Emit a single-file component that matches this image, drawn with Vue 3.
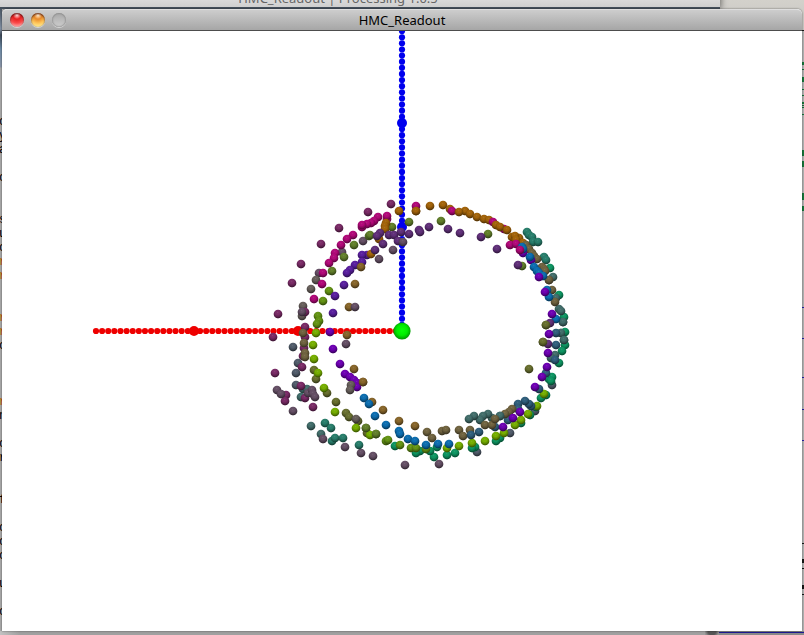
<script setup>
const palette = {
  plum: '#7b2b67', magenta: '#b3087a', mauve: '#665066', purple: '#61307a',
  indigo: '#5a1fa0', violet: '#6f00b5', olive: '#62802a', moss: '#69702f',
  green: '#659514', lime: '#77b000', orange: '#a46409', brown: '#88662a',
  khaki: '#716440', grey: '#68605c', slate: '#515c6b', steel: '#305f7d',
  blue: '#0c6fb2', teal: '#287f6c', dusk: '#426e6b', jade: '#0d9763',
}

// Samples per colour, drawn in order: "x,y x,y ..."
const samples = [
  ['dusk', '311,426 321,434 303,389 307,389 301,397 553,277 561,333'],
  ['slate', '293,347 298,363 296,373 296,385 564,340 563,322 552,385 535,411 510,433 477,452'],
  ['mauve', '363,241 342,252 319,273 293,411 323,439 345,447 361,453 373,456 405,465 439,464'],
  ['grey', '316,280 311,289 303,306 302,316 549,280'],
  ['plum', '391,204 368,212 339,228 321,244 301,264 292,283 278,314 305,312 305,327 305,337 273,337 275,373 304,348 303,356 302,367 301,386 305,398 286,395 285,401 313,407'],
  ['mauve', '277,390 281,394 308,393 312,390 313,394 315,397 302,312'],
  ['khaki', '303,333 304,343 305,353 305,357'],
  ['magenta', '387,219 387,216 378,217 374,221 371,223 367,224 362,227 362,225 353,235 347,239 341,245 335,253 334,258 329,263 323,273 322,284 314,299'],
  ['teal', '527,232 529,235 532,237 533,242 538,242 544,257 546,260 325,423 331,428 332,441 335,438 343,438 359,445'],
  ['jade', '550,268 559,295 564,317 565,332 565,345 562,351 559,363 549,379 552,377 551,381 546,395 541,398 536,407 530,415 521,423 500,438 496,441 475,447 472,448 455,453 447,455 434,457 437,447 430,451 420,451 416,453 395,446'],
  ['dusk', '556,298 559,309 561,311 561,333 564,340 563,322 555,355 551,358'],
  ['olive', '369,236 354,245 344,257 332,271 409,222 392,227 370,235 441,221 488,234 522,266'],
  ['green', '329,291 323,301 318,316 319,321 317,324 376,434 386,441 388,440 400,445 411,448 416,448 426,449'],
  ['moss', '314,370 316,379 327,393 336,402 346,413 349,417 358,421 366,428 367,433 529,369 543,342 546,325'],
  ['lime', '316,333 313,345 314,359 318,373 324,388 335,412 356,428 370,435 447,448 459,446 472,443 485,441 496,436 504,433 515,425 521,420 528,414 537,406 544,394'],
  ['olive', '366,428 376,434'],
  ['indigo', '367,255 362,255 362,262 355,265 350,270 347,273 344,285 335,296 333,313'],
  ['orange', '399,211 416,211 430,206 443,205 386,223 385,226 385,229 371,254 379,239'],
  ['magenta', '416,206'],
  ['orange', '416,211 450,209'],
  ['magenta', '452,211'],
  ['orange', '465,211 459,212 470,214 477,217 484,219 489,220'],
  ['magenta', '493,222 504,229'],
  ['orange', '496,225 500,227 507,230 512,237 519,238 515,236 516,240 523,243'],
  ['khaki', '526,245 529,249 532,253 534,256 537,259 542,267 544,269 545,271 549,280 552,290 555,302'],
  ['brown', '361,267 355,284 349,307 347,335 354,369 363,382 372,402 383,410 399,421 415,426'],
  ['mauve', '355,307 393,250 379,259 346,344'],
  ['purple', '389,235 394,235 380,233 377,236 383,244 375,250 398,241 401,232 409,234 419,230 420,232 429,227 448,229 460,233 481,237 497,249 518,265'],
  ['mauve', '403,242'],
  ['magenta', '510,245 516,244'],
  ['violet', '523,253'],
  ['blue', '522,247 523,249'],
  ['magenta', '520,250'],
  ['violet', '531,260'],
  ['blue', '530,257 534,267 537,271 539,273 543,276'],
  ['violet', '539,277'],
  ['blue', '547,290 549,297 556,319'],
  ['violet', '545,292 552,314'],
  ['steel', '556,333 556,345 555,360 546,373 539,389'],
  ['purple', '550,323 548,344'],
  ['moss', '546,325 543,342'],
  ['violet', '330,332 333,349 340,364 345,374 350,377 354,380 357,383 357,387 549,334 548,353 547,367 542,377 535,387'],
  ['brown', '363,382'],
  ['grey', '351,385 350,390 356,419'],
  ['steel', '531,406 529,404 525,401 518,404 518,409 508,420 495,427'],
  ['khaki', '427,432 432,438 442,431 446,430 459,430 463,436 470,430 512,409 509,412 505,414'],
  ['blue', '364,398 369,404 375,416 386,425 399,431 400,434 408,439 415,441 426,445 438,444 449,444'],
  ['steel', '479,432 471,435 500,416'],
  ['dusk', '500,416 492,418 488,414 483,416 480,420 474,416 469,419'],
  ['khaki', '485,425 492,425 495,419'],
  ['violet', '520,412 513,418 503,427'],
]
const dots = samples.flatMap(([tone, list]) =>
  list.split(' ').map((pair) => {
    const [x, y] = pair.split(',').map(Number)
    return { x, y, fill: palette[tone] }
  }))

const origin = { x: 402, y: 331 }
const step = 6.12
const xAxis = Array.from({ length: 50 }, (_, i) => origin.x - (i + 1) * step)
const yAxis = Array.from({ length: 49 }, (_, i) => origin.y - (i + 1) * step)

const code = 'cya c  suc11  11c   1n cr  f ccc u c'.split('')
const marks = [
  ['#16763a', [[62, 3], [69, 1], [77, 5], [89, 1], [95, 1], [102, 2], [105, 1], [107, 1], [114, 1], [150, 6], [161, 6], [193, 7], [206, 5]]],
  ['#2820a8', [[307, 1], [338, 1], [377, 1], [409, 1], [440, 1]]],
  ['#161616', [[30, 1], [543, 1], [559, 4], [568, 1], [585, 4], [594, 1]]],
].flatMap(([fill, list]) => list.map(([y, h]) => ({ fill, y, h })))
</script>

<template>
  <div class="desktop">
    <div class="rear-title">HMC_Readout | Processing 1.0.5</div>
    <div class="rear-code" aria-hidden="true">
      <span v-for="(c, i) in code" :key="i" :class="{ keyword: c === '1' }">{{ c === '1' ? 'r' : c }}</span>
    </div>
    <svg class="rear-marks" viewBox="0 0 2 635" preserveAspectRatio="none" aria-hidden="true">
      <rect v-for="m in marks" :key="m.y" x="0" :y="m.y" width="2" :height="m.h" :fill="m.fill" />
    </svg>
    <div class="rear-foot"><i class="knob"></i><i class="rule"></i></div>

    <main class="window">
      <header class="titlebar">
        <div class="controls">
          <button class="control close" type="button" aria-label="Close"></button>
          <button class="control minimise" type="button" aria-label="Minimise"></button>
          <button class="control zoom" type="button" aria-label="Zoom" disabled></button>
        </div>
        <h1>HMC_Readout</h1>
      </header>
      <div class="canvas">
        <svg class="plot" viewBox="2 31 800 600" role="img" aria-label="Magnetometer samples">
          <defs>
            <radialGradient id="shade" cx="0.46" cy="0.32" r="0.72">
              <stop offset="0" stop-color="#fff" stop-opacity="0.1" />
              <stop offset="0.35" stop-color="#000" stop-opacity="0" />
              <stop offset="0.7" stop-color="#000" stop-opacity="0.28" />
              <stop offset="1" stop-color="#000" stop-opacity="0.65" />
            </radialGradient>
            <radialGradient id="core" cx="0.5" cy="0.45" r="0.56">
              <stop offset="0" stop-color="#08ff08" />
              <stop offset="0.55" stop-color="#00ec00" />
              <stop offset="1" stop-color="#008c00" />
            </radialGradient>
          </defs>
          <g fill="#ee0000">
            <circle v-for="x in xAxis" :key="x" :cx="x" :cy="origin.y" r="3.1" />
            <circle cx="194" cy="331" r="5" />
            <circle cx="298" cy="331" r="5" />
          </g>
          <g fill="#0000ee">
            <circle v-for="y in yAxis" :key="y" :cx="origin.x" :cy="y" r="3.1" />
            <circle cx="402" cy="123" r="5" />
            <circle cx="402" cy="227" r="5" />
          </g>
          <g v-for="(d, i) in dots" :key="i">
            <circle :cx="d.x" :cy="d.y" r="4.3" :fill="d.fill" />
            <circle :cx="d.x" :cy="d.y" r="4.3" fill="url(#shade)" />
          </g>
          <circle cx="402" cy="331" r="8.6" fill="url(#core)" />
        </svg>
      </div>
    </main>
  </div>
</template>

<style>
body { margin: 0; }
</style>

<style scoped>
.desktop {
  position: relative;
  display: flex;
  box-sizing: border-box;
  min-height: 100vh;
  padding: 9px 2px 4px;
  overflow: hidden;
  background: linear-gradient(#d3d1cb 0, #c8c7c3 30px, #b2b2b2 31px);
  font-family: "Noto Sans", "Open Sans", sans-serif;
}
.rear-title {
  position: absolute;
  top: -8px;
  left: 0;
  box-sizing: border-box;
  width: 720px;
  height: 17px;
  padding-right: 44px;
  border-bottom: 2px solid #45505c;
  background: linear-gradient(#e6e6e6, #cfcfcf);
  box-shadow: 1px 0 6px rgba(0, 0, 0, 0.5);
  color: #666;
  font-size: 13px;
  line-height: 12px;
  text-align: center;
}
.rear-code {
  position: absolute;
  top: 9px;
  bottom: 0;
  left: 0;
  width: 2px;
  padding-top: 106px;
  overflow: hidden;
  background: linear-gradient(#4c5866 0, #8493a6 20px, #3d4958 26px, #6f8da8 40px, #8c96a8 58px, #aaa 59px);
  color: #000;
  font: 12px/14px "Liberation Mono", monospace;
  text-indent: -1px;
}
.rear-code span { display: block; height: 14px; }
.rear-code .keyword { color: #c25c00; }
.rear-marks {
  position: absolute;
  top: 0;
  right: 0;
  width: 2px;
  height: 100%;
}
.rear-foot {
  position: absolute;
  right: 0;
  bottom: 0;
  left: 0;
  display: flex;
  height: 4px;
  background: linear-gradient(90deg, #c2c2c2, #a0a0a0 20px);
}
.knob {
  width: 14px;
  margin-left: 705px;
  background: radial-gradient(circle at 7px 0, #555 4px, #929292 7px);
}
.rule {
  flex: 1;
  box-sizing: border-box;
  border-top: 1px solid #888;
  border-bottom: 2px solid #888;
  background: #1d1893;
}
.window {
  position: relative;
  display: flex;
  flex: 1;
  flex-direction: column;
  border-radius: 5px 5px 0 0;
  background: #fff;
  box-shadow: 0 0 2px rgba(0, 0, 0, 0.6);
}
.titlebar {
  display: grid;
  grid-template-columns: 1fr auto 1fr;
  align-items: center;
  box-sizing: border-box;
  height: 22px;
  padding: 0 8px;
  border-top: 1px solid #dedede;
  border-bottom: 1px solid #4d4d4d;
  border-radius: 5px 5px 0 0;
  background: linear-gradient(#cdcdcd, #a6a6a6);
}
h1 {
  margin: 0;
  color: #000;
  font-size: 13px;
  font-weight: 400;
  line-height: 20px;
}
.controls { display: flex; gap: 7px; }
.control {
  width: 14px;
  height: 14px;
  padding: 0;
  border: 0;
  border-radius: 50%;
  box-shadow: inset 0 1px 2px rgba(50, 0, 0, 0.8), 0 1px 0 rgba(255, 255, 255, 0.5);
}
.close { background: radial-gradient(circle at 50% 15%, #fff 0, #ffb0b0 1px, #e92020 4px, #fb4b4b 8px, #ffb4b4 12px); }
.minimise { background: radial-gradient(circle at 50% 15%, #fff 0, #ffd8a8 1px, #e88a2c 4px, #ffc458 8px, #fff09a 12px); }
.zoom {
  background: linear-gradient(#a8a8a8, #cfcfcf);
  box-shadow: inset 0 0 2px #666, 0 1px 0 rgba(255, 255, 255, 0.5);
}
.canvas {
  display: flex;
  flex: 1;
}
.plot {
  display: block;
  width: 100%;
}
</style>
